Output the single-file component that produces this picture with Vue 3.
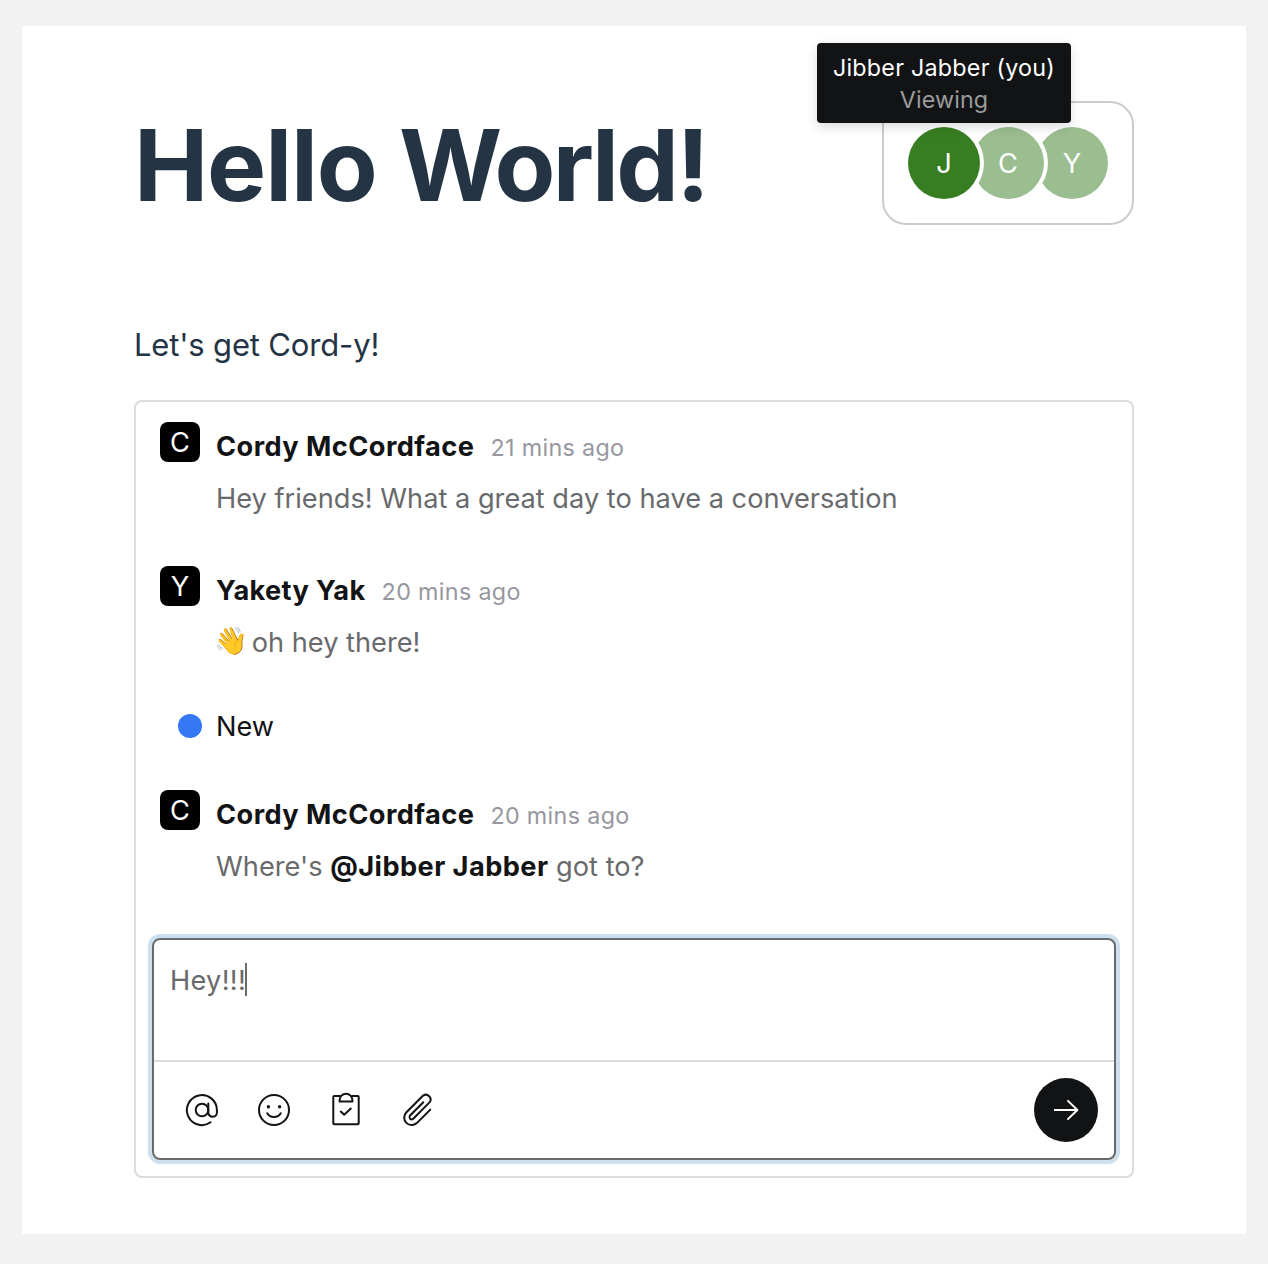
<script setup>
const viewers = [
  { initial: 'J', present: true },
  { initial: 'C', present: false },
  { initial: 'Y', present: false }
]
</script>

<template>
  <div class="page">
    <main class="sheet">
      <header class="header">
        <h1 class="title">Hello <span class="title-end">World!</span></h1>
        <div class="presence">
          <div
            v-for="(v, i) in viewers"
            :key="v.initial"
            class="viewer"
            :class="{ away: !v.present }"
            :style="{ zIndex: viewers.length - i }"
          >{{ v.initial }}</div>
          <div class="tooltip">
            <div class="tooltip-name">Jibber Jabber (you)</div>
            <div class="tooltip-status">Viewing</div>
          </div>
        </div>
      </header>

      <p class="intro">Let's get Cord-y!</p>

      <section class="thread">
        <article class="message">
          <div class="avatar">C</div>
          <div class="body">
            <div class="meta"><span class="name">Cordy McCordface</span><time class="time">21 mins ago</time></div>
            <div class="text">Hey friends! What a great day to have a conversation</div>
          </div>
        </article>

        <article class="message">
          <div class="avatar">Y</div>
          <div class="body">
            <div class="meta"><span class="name tight">Yakety Yak</span><time class="time">20 mins ago</time></div>
            <div class="text"><span class="emoji">👋</span> oh hey there!</div>
          </div>
        </article>

        <div class="new-marker"><span class="dot"></span><span>New</span></div>

        <article class="message">
          <div class="avatar">C</div>
          <div class="body">
            <div class="meta"><span class="name">Cordy McCordface</span><time class="time">20 mins ago</time></div>
            <div class="text">Where's <b class="mention">@Jibber Jabber</b> got to?</div>
          </div>
        </article>

        <div class="composer">
          <div class="editor"><span>Hey!!!</span><i class="caret"></i></div>
          <div class="toolbar">
            <svg class="icon" viewBox="0 0 40 40">
              <circle cx="20" cy="20" r="6.3" />
              <path d="M26.3 13.4v9a4.3 4.3 0 0 0 8.6 0V20a15 15 0 1 0-6.3 12.3" />
            </svg>
            <svg class="icon" viewBox="0 0 40 40">
              <circle cx="20" cy="20" r="15" />
              <path d="M13.3 23.2a7.8 7.8 0 0 0 13.4 0" />
              <circle class="solid" cx="14.4" cy="16.7" r="1.7" />
              <circle class="solid" cx="25.6" cy="16.7" r="1.7" />
            </svg>
            <svg class="icon" viewBox="0 0 40 40">
              <path d="M14 6H8.3a1 1 0 0 0-1 1v26.2a1 1 0 0 0 1 1h23.4a1 1 0 0 0 1-1V7a1 1 0 0 0-1-1H26" />
              <path d="M13.6 11.4V10a6.4 6.2 0 0 1 12.8 0v1.4z" />
              <path d="M14.8 21.6l3.4 3.2 6.6-6.2" />
            </svg>
            <svg class="icon" viewBox="0 0 40 40">
              <path d="M32.3 19.6L18.8 33.1A7.5 7.5 0 0 1 8.2 22.5L24.9 5.8A4.7 4.7 0 0 1 31.5 12.4L15 29A2.3 2.3 0 0 1 11.8 25.8L25.3 12.3" />
            </svg>
            <button class="send" type="button">
              <svg class="arrow" viewBox="0 0 32 32">
                <path d="M4 16h23.4M17.4 6.4L27.4 16l-10 9.6" />
              </svg>
            </button>
          </div>
        </div>
      </section>
    </main>
  </div>
</template>

<style>
body {
  margin: 0;
  background: #f2f2f2;
}
</style>

<style scoped>
.page {
  box-sizing: border-box;
  min-height: 1264px;
  padding: 26px 22px 30px;
  background: #f2f2f2;
  font-family: Inter, "Noto Color Emoji", sans-serif;
  display: flex;
}
.sheet {
  flex: 1;
  box-sizing: border-box;
  padding: 75px 112px 56px;
  background: #fff;
}
.header {
  display: flex;
  align-items: center;
  justify-content: space-between;
  height: 124px;
}
.title {
  margin: 0;
  padding-top: 3px;
  font-size: 99.4px;
  line-height: 112px;
  font-weight: 700;
  letter-spacing: -1.15px;
  color: #253445;
}
.title-end {
  letter-spacing: -2.7px;
}
.presence {
  position: relative;
  display: flex;
  padding: 24px;
  border: 2px solid #ccc;
  border-radius: 24px;
}
.viewer {
  position: relative;
  width: 72px;
  height: 72px;
  border-radius: 50%;
  background: #377e22;
  box-shadow: 0 0 0 4px #fff;
  color: #fff;
  font-size: 27.2px;
  line-height: 74px;
  text-align: center;
}
.viewer + .viewer {
  margin-left: -8px;
}
.viewer.away {
  background: #9bbe91;
}
.tooltip {
  position: absolute;
  z-index: 10;
  top: -60px;
  left: -67px;
  box-sizing: border-box;
  width: 254px;
  height: 80px;
  padding: 9px 0 7px;
  border-radius: 4px;
  background: #121314;
  box-shadow: 0 4px 12px rgba(0, 0, 0, 0.14);
  color: #fff;
  font-size: 23.3px;
  line-height: 32px;
  text-align: center;
  white-space: nowrap;
}
.tooltip-name {
  letter-spacing: 0.24px;
}
.tooltip-status {
  letter-spacing: 0.1px;
  color: #9a9b9d;
}
.intro {
  margin: 96px 0 31px;
  font-size: 31px;
  line-height: 48px;
  letter-spacing: -0.17px;
  color: #253445;
}
.thread {
  padding: 20px 16px 16px;
  border: 2px solid #dadce0;
  border-radius: 8px;
}
.message {
  display: flex;
  gap: 16px;
  height: 96px;
  padding-left: 8px;
}
.message + .message {
  margin-top: 48px;
}
.avatar {
  flex: none;
  width: 40px;
  height: 40px;
  border-radius: 8px;
  background: #000;
  color: #fff;
  font-size: 27.2px;
  line-height: 42px;
  text-align: center;
}
.body {
  padding-top: 5px;
  font-size: 27.2px;
  line-height: 40px;
}
.meta {
  display: flex;
  align-items: baseline;
  gap: 16px;
  height: 40px;
  margin-bottom: 12px;
}
.name,
.mention {
  font-weight: 700;
  letter-spacing: 0.44px;
  color: #121314;
}
.name.tight {
  letter-spacing: 0.33px;
}
.time {
  font-size: 23.3px;
  letter-spacing: 0.34px;
  color: #97979f;
}
.text {
  height: 40px;
  letter-spacing: 0.01px;
  color: #696a6c;
  white-space: nowrap;
}
.emoji {
  display: inline-block;
  width: 28px;
  line-height: 30px;
  text-indent: -2px;
  vertical-align: 2px;
}
.new-marker {
  display: flex;
  align-items: center;
  gap: 14px;
  height: 40px;
  margin: 44px 0;
  padding-left: 26px;
  font-size: 27.2px;
  color: #121314;
}
.dot {
  width: 24px;
  height: 24px;
  border-radius: 50%;
  background: #3478f6;
}
.composer {
  margin-top: 52px;
  border: 2px solid #696a6c;
  border-radius: 8px;
  box-shadow: 0 0 0 4px #cde0ef;
}
.editor {
  display: flex;
  box-sizing: border-box;
  height: 120px;
  padding: 21px 16px 19px;
  font-size: 27.2px;
  line-height: 40px;
  letter-spacing: 0.3px;
  color: #696a6c;
}
.caret {
  width: 2px;
  height: 33px;
  margin: 2px 0 0 -1px;
  background: #696a6c;
}
.toolbar {
  display: flex;
  align-items: center;
  gap: 32px;
  height: 96px;
  padding: 0 16px 0 28px;
  border-top: 2px solid #dadce0;
}
.icon,
.arrow {
  fill: none;
  stroke: #121314;
  stroke-width: 2;
  stroke-linecap: round;
  stroke-linejoin: round;
}
.icon {
  width: 40px;
  height: 40px;
}
.solid {
  fill: #121314;
  stroke: none;
}
.send {
  display: flex;
  align-items: center;
  justify-content: center;
  width: 64px;
  height: 64px;
  margin-left: auto;
  padding: 0;
  border: 0;
  border-radius: 50%;
  background: #121314;
}
.arrow {
  width: 32px;
  height: 32px;
  stroke: #fff;
  stroke-linecap: butt;
}
</style>
